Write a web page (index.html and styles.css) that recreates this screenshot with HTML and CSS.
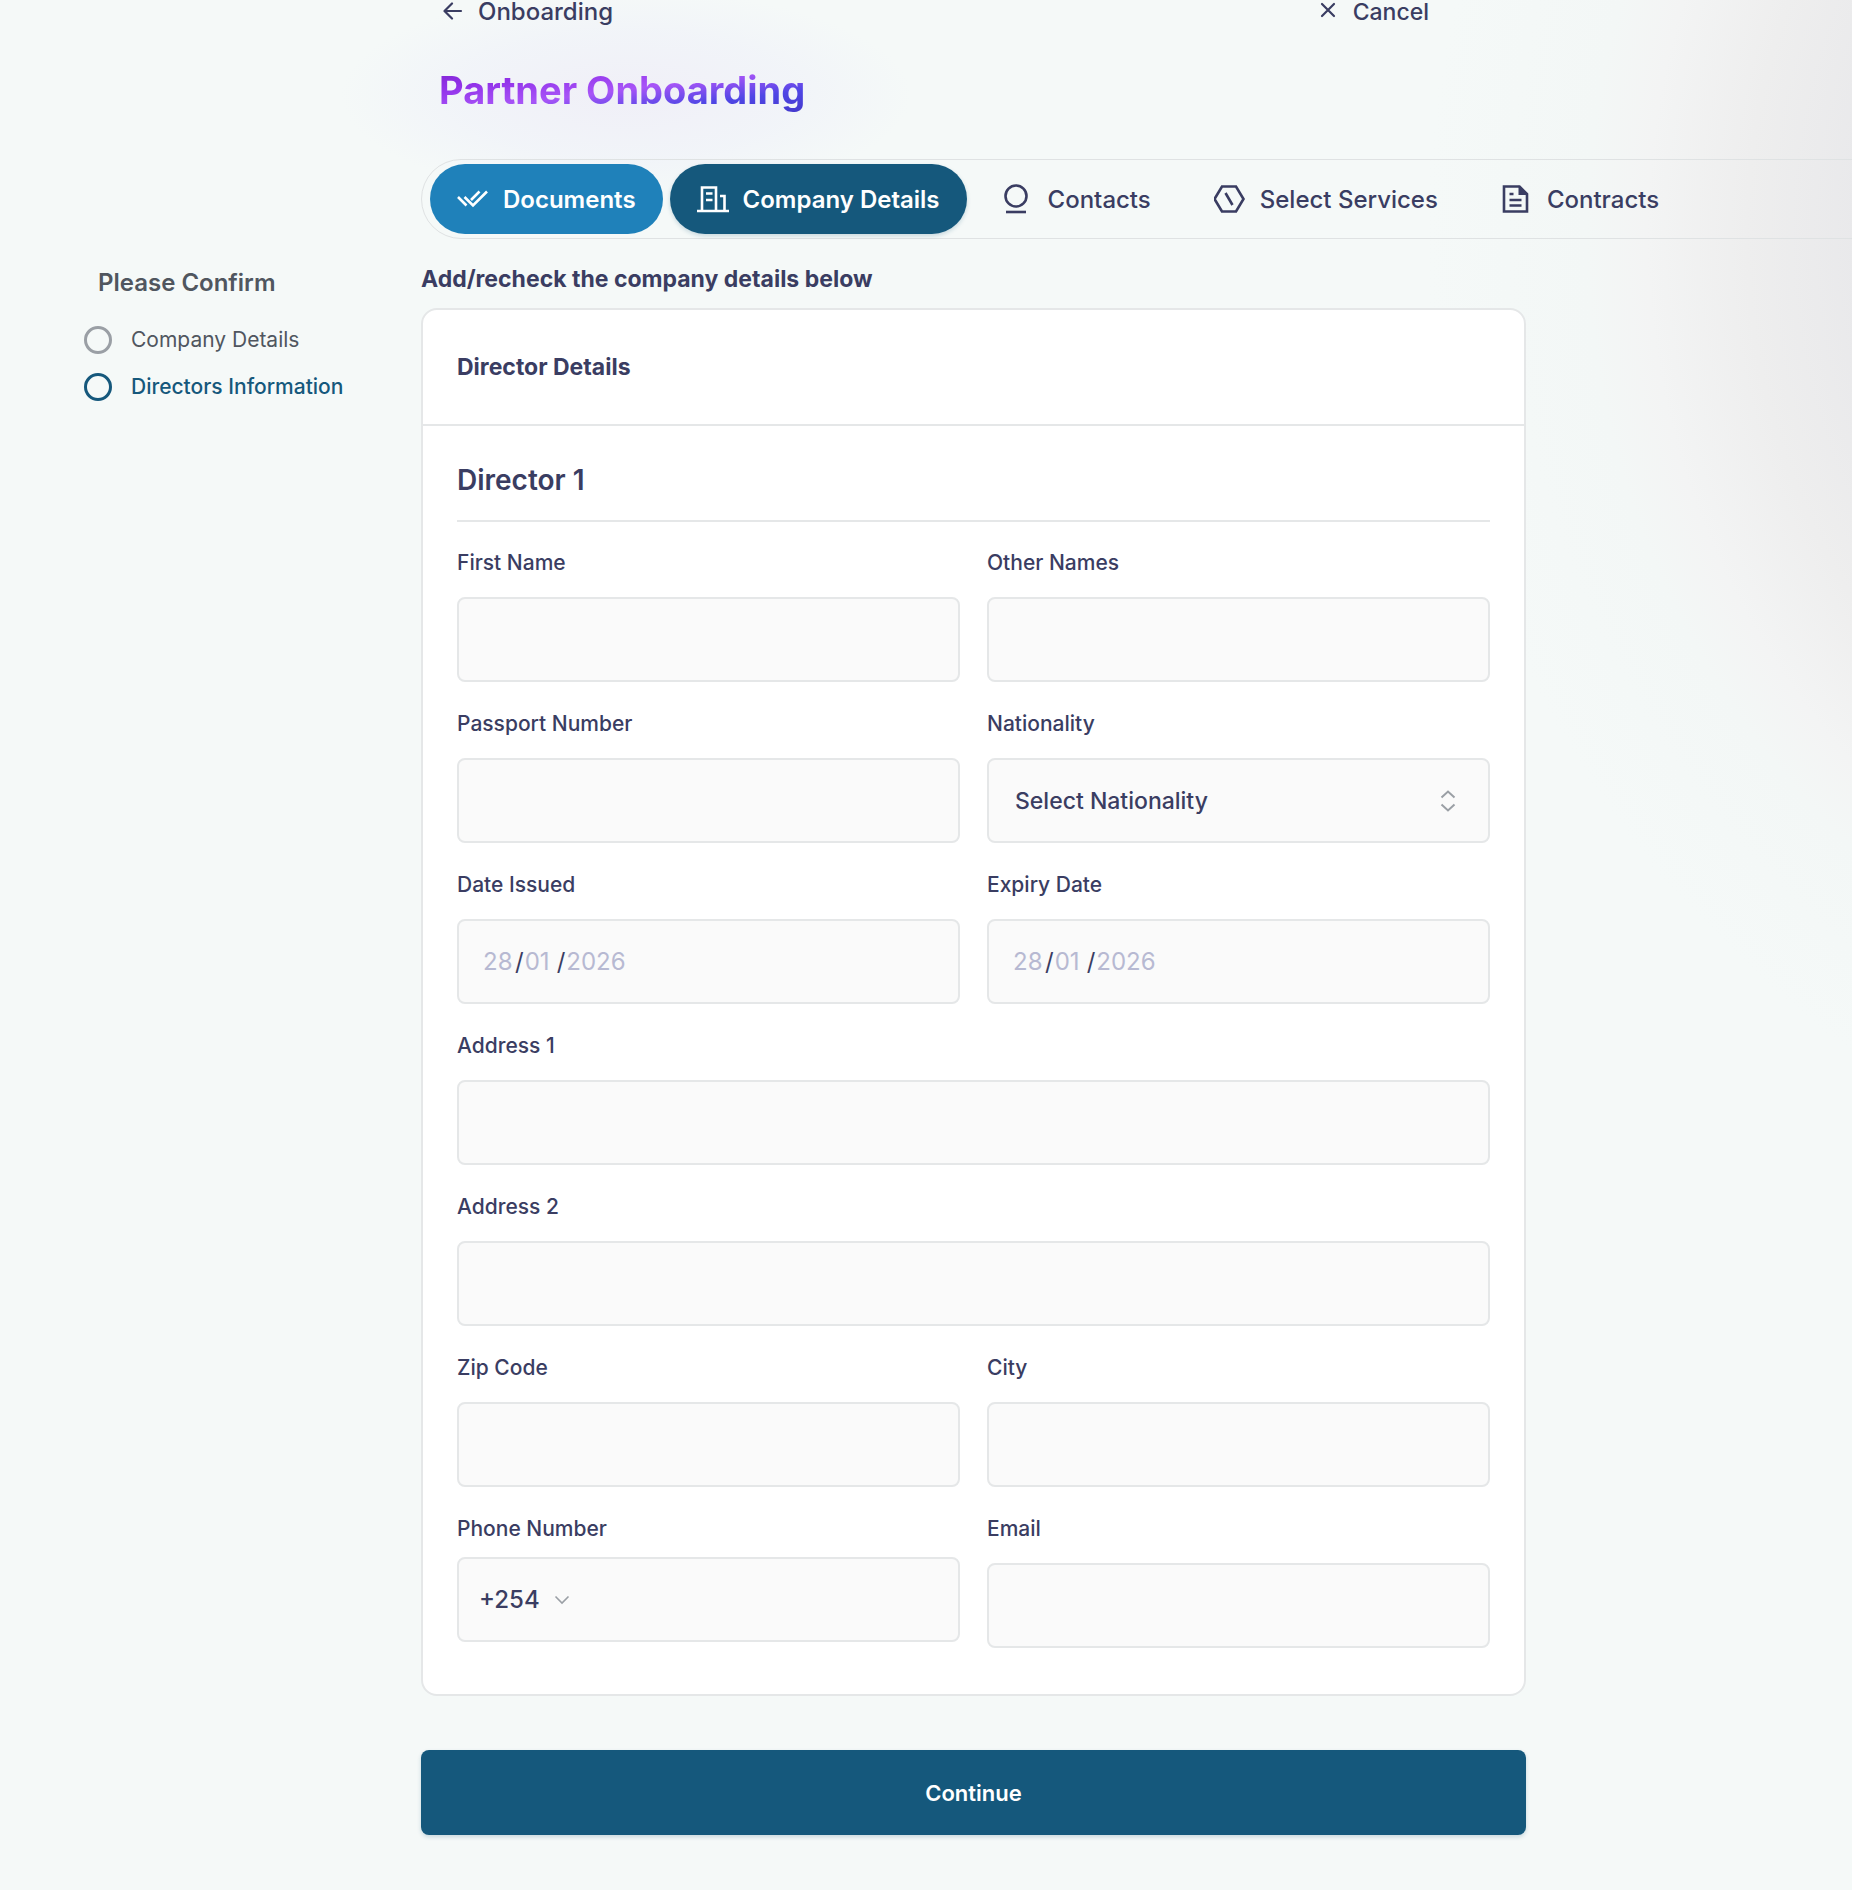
FILE: index.html
```html
<!DOCTYPE html>
<html lang="en">
<head>
    <meta charset="UTF-8">
    <meta name="viewport" content="width=device-width, initial-scale=1.0">
    <title>Partner Onboarding</title>
    <link rel="stylesheet" href="styles.css">
</head>
<body>
    <div class="page">
        <!-- Left steps -->
        <aside class="sidebar">
            <h2>Please Confirm</h2>
            <ul class="steps">
                <li><a href="#company"><span class="dot"></span>Company Details</a></li>
                <li><a href="#directors" class="current"><span class="dot"></span>Directors Information</a></li>
            </ul>
        </aside>

        <main class="content">
            <div class="top-bar">
                <a href="#back" class="top-link">
                    <svg width="20" height="20" viewBox="0 0 20 20" fill="none" stroke="currentColor" stroke-width="2.200" stroke-linecap="round" stroke-linejoin="round"><path d="M18 9H2M9 1.500L1.500 9L9 16.500"/></svg>
                    Onboarding
                </a>
                <a href="#cancel" class="top-link cancel">
                    <svg width="20" height="20" viewBox="0 0 20 20" fill="none" stroke="currentColor" stroke-width="2.200" stroke-linecap="round"><path d="M4 2L16 14M16 2L4 14"/></svg>
                    Cancel
                </a>
            </div>

            <h1><span>Partner Onboarding</span></h1>

            <!-- Tabs -->
            <nav class="tabs">
                <a href="#documents" class="tab done">
                    <svg width="32" height="32" viewBox="0 0 32 32" fill="none" stroke="currentColor" stroke-width="2.600"><path d="M1 14L9.500 22.500M7.500 14L16 22.500L30 8.500M14 17L22.500 8.500"/></svg>
                    Documents
                </a>
                <a href="#company" class="tab active">
                    <svg width="32" height="32" viewBox="0 0 32 32" fill="none" stroke="currentColor" stroke-width="2.600"><path d="M0 28H32M5 28V4.500H19V28M23 13H27.500V28M9 10.500H15.500M9 17H15.500"/></svg>
                    Company Details
                </a>
                <a href="#contacts" class="tab">
                    <svg width="32" height="32" viewBox="0 0 32 32" fill="none" stroke="currentColor" stroke-width="2.600"><circle cx="14" cy="13" r="10.500"/><path d="M4 29H24"/></svg>
                    Contacts
                </a>
                <a href="#services" class="tab">
                    <svg width="32" height="32" viewBox="0 0 32 32" fill="none" stroke="currentColor" stroke-width="2.600"><path d="M8 3.500H22L29.500 16L22 28.500H8L0.500 16ZM11.500 10L18.500 22"/></svg>
                    Select Services
                </a>
                <a href="#contracts" class="tab">
                    <svg width="32" height="32" viewBox="0 0 32 32" fill="none" stroke="currentColor" stroke-width="2.600"><path d="M3 3.500H18.500L26 11V28.500H3ZM8.500 11H12.500M8.500 17H20.500M8.500 22.500H20.500"/><path d="M17.500 2.500L27 12H17.500Z" fill="currentColor" stroke="none"/></svg>
                    Contracts
                </a>
            </nav>

            <form class="form">
                <h3>Add/recheck the company details below</h3>

                <div class="card">
                    <div class="card-header">Director Details</div>

                    <div class="card-body">
                        <h4>Director 1</h4>

                        <div class="fields">
                            <div class="field">
                                <label for="firstName">First Name</label>
                                <input type="text" id="firstName">
                            </div>
                            <div class="field">
                                <label for="otherNames">Other Names</label>
                                <input type="text" id="otherNames">
                            </div>
                            <div class="field">
                                <label for="passport">Passport Number</label>
                                <input type="text" id="passport">
                            </div>
                            <div class="field">
                                <label for="nationality">Nationality</label>
                                <div class="select-box">
                                    <select id="nationality">
                                        <option>Select Nationality</option>
                                    </select>
                                    <svg class="arrows" width="16" height="22" viewBox="0 0 16 22" fill="none" stroke="currentColor" stroke-width="2"><path d="M1.500 7.500L8 1.500L14.500 7.500M1.500 14.500L8 20.500L14.500 14.500"/></svg>
                                </div>
                            </div>
                            <div class="field">
                                <label for="issuedDay">Date Issued</label>
                                <div class="date-box">
                                    <input type="text" id="issuedDay" class="part" placeholder="28"><span>/</span><input type="text" class="part" placeholder="01" aria-label="Month issued"><span>/</span><input type="text" class="part year" placeholder="2026" aria-label="Year issued">
                                </div>
                            </div>
                            <div class="field">
                                <label for="expiryDay">Expiry Date</label>
                                <div class="date-box">
                                    <input type="text" id="expiryDay" class="part" placeholder="28"><span>/</span><input type="text" class="part" placeholder="01" aria-label="Expiry month"><span>/</span><input type="text" class="part year" placeholder="2026" aria-label="Expiry year">
                                </div>
                            </div>
                            <div class="field wide">
                                <label for="address1">Address 1</label>
                                <input type="text" id="address1">
                            </div>
                            <div class="field wide">
                                <label for="address2">Address 2</label>
                                <input type="text" id="address2">
                            </div>
                            <div class="field">
                                <label for="zip">Zip Code</label>
                                <input type="text" id="zip">
                            </div>
                            <div class="field">
                                <label for="city">City</label>
                                <input type="text" id="city">
                            </div>
                            <div class="field phone">
                                <label for="phone">Phone Number</label>
                                <div class="phone-box">
                                    <select aria-label="Country code">
                                        <option>+254</option>
                                    </select>
                                    <svg width="16" height="10" viewBox="0 0 16 10" fill="none" stroke="currentColor" stroke-width="1.600"><path d="M1.500 1.500L8 8L14.500 1.500"/></svg>
                                    <input type="tel" id="phone">
                                </div>
                            </div>
                            <div class="field">
                                <label for="email">Email</label>
                                <input type="email" id="email">
                            </div>
                        </div>
                    </div>
                </div>

                <button type="submit" class="btn">Continue</button>
            </form>
        </main>
    </div>
</body>
</html>
```
FILE: styles.css
```css
* {
    box-sizing: border-box;
}

body {
    margin: 0;
    min-height: 100vh;
    font-family: Inter, "Liberation Sans", sans-serif;
    font-weight: 500;
    color: #3a3d62;
    background-color: #f5f9f8;
    background-image: radial-gradient(circle 1000px at calc(100% + 575px) 235px, #e9e9eb 57%, #eeeeee 68%, #f3f4f4 78%, #f3f7f6 84%, #f5f9f8 100%);
    background-repeat: no-repeat;
    overflow-x: hidden;
}

a {
    color: inherit;
    text-decoration: none;
}

.page {
    display: grid;
    grid-template-columns: 337px minmax(0, 1fr);
    padding-left: 84px;
}

/* Sidebar */
.sidebar {
    padding-top: 267px;
}

.sidebar h2 {
    margin: 0 0 27px;
    padding-left: 14px;
    font-size: 24px;
    line-height: 32px;
    font-weight: 600;
    color: #50565f;
}

.steps {
    list-style: none;
    margin: 0;
    padding: 0;
    display: grid;
    row-gap: 19px;
}

.steps a {
    display: flex;
    align-items: center;
    gap: 19px;
    font-size: 21px;
    line-height: 28px;
    font-weight: 400;
    color: #50565f;
}

.steps .current {
    color: #15587c;
    font-weight: 500;
}

.dot {
    width: 28px;
    height: 28px;
    border: 3px solid #9a9fa5;
    border-radius: 50%;
}

.current .dot {
    border-color: #15587c;
}

/* Top links */
.top-bar {
    position: relative;
    z-index: 1;
    display: flex;
    justify-content: space-between;
    max-width: 1105px;
    height: 40px;
    padding: 0 97px 0 22px;
}

.top-link {
    display: flex;
    align-items: center;
    gap: 15px;
    height: 23px;
    font-size: 24px;
}

.top-link.cancel {
    font-size: 23px;
}

h1 {
    position: relative;
    z-index: 0;
    margin: 0;
    padding: 26px 18px 45px;
    font-size: 38px;
    line-height: 48px;
    font-weight: 700;
}

/* Soft glow behind the title */
h1::before {
    content: "";
    position: absolute;
    z-index: -1;
    top: -50px;
    left: -80px;
    width: 570px;
    height: 210px;
    background: radial-gradient(closest-side, rgba(238, 235, 247, 0.7), rgba(239, 241, 249, 0.6) 60%, rgba(241, 245, 250, 0));
}

h1 span {
    display: inline-block;
    background: linear-gradient(to bottom right, #7e22ce, #9333ea, #a855f7, #4f46e5, #4338ca);
    -webkit-background-clip: text;
    background-clip: text;
    color: transparent;
}

/* Tabs */
.tabs {
    position: relative;
    display: flex;
    gap: 7px;
    margin-right: -40px;
    padding: 4px 8px;
    border: 1px solid #dfe2e3;
    border-radius: 41px;
}

.tab {
    display: flex;
    align-items: center;
    gap: 14px;
    height: 70px;
    padding: 0 28px;
    border-radius: 35px;
    font-size: 24px;
    white-space: nowrap;
}

.tab.done,
.tab.active {
    padding: 0 27px;
    color: #fff;
    font-weight: 600;
}

.tab.done {
    background-color: #1f81ba;
}

.tab.active {
    background-color: #15587c;
    box-shadow: 0 2px 4px rgba(21, 88, 124, 0.2);
}

/* Form */
.form {
    max-width: 1105px;
    padding-bottom: 55px;
}

h3 {
    margin: 0;
    padding: 25px 0 14px;
    font-size: 23px;
    line-height: 30px;
    font-weight: 700;
}

.card {
    background-color: #fff;
    border: 2px solid #e5e7e8;
    border-radius: 16px;
}

.card-header {
    padding: 42px 34px;
    border-bottom: 2px solid #e5e7e8;
    font-size: 23px;
    line-height: 30px;
    font-weight: 700;
}

.card-body {
    padding: 34px 34px 46px;
}

h4 {
    margin: 0 0 27px;
    padding-bottom: 20px;
    border-bottom: 2px solid #e5e7e8;
    font-size: 28px;
    line-height: 40px;
    font-weight: 600;
}

.fields {
    display: grid;
    grid-template-columns: repeat(2, minmax(0, 1fr));
    gap: 28px 27px;
}

.field {
    display: flex;
    flex-direction: column;
    gap: 20px;
}

.field.wide {
    grid-column: span 2;
}

.field.phone {
    gap: 14px;
}

label {
    font-size: 21px;
    line-height: 28px;
}

.field > input,
.select-box select,
.date-box,
.phone-box {
    width: 100%;
    height: 85px;
    border: 2px solid #e5e7e8;
    border-radius: 8px;
    background-color: #fafafa;
    font: inherit;
    font-size: 23px;
    color: inherit;
}

.field > input {
    padding: 0 26px;
}

.select-box {
    position: relative;
}

select {
    appearance: none;
    font: inherit;
    color: inherit;
}

.select-box select {
    padding: 0 26px;
}

.arrows {
    position: absolute;
    top: 32px;
    right: 34px;
    color: #9a9fa5;
}

.date-box {
    display: flex;
    align-items: center;
    padding: 0 24px;
    font-size: 24px;
    font-weight: 400;
}

.date-box span {
    margin: 0 1px 0 2px;
}

.date-box .part {
    width: 30px;
    padding: 0;
    border: 0;
    background: none;
    font: inherit;
}

.date-box .year {
    width: 64px;
}

.part::placeholder {
    color: #b7b9d2;
}

.phone-box {
    display: flex;
    align-items: center;
    gap: 14px;
    padding: 0 20px;
    font-size: 24px;
}

.phone-box select {
    padding: 0;
    border: 0;
    background: none;
}

.phone-box svg {
    color: #9a9fa5;
}

.phone-box input {
    flex: 1;
    min-width: 0;
    border: 0;
    background: none;
    font: inherit;
}

.btn {
    display: block;
    width: 100%;
    height: 85px;
    margin-top: 54px;
    border: 0;
    border-radius: 8px;
    background-color: #15587c;
    color: #fff;
    font: inherit;
    font-size: 22px;
    font-weight: 600;
    box-shadow: 0 2px 4px rgba(21, 88, 124, 0.2);
    cursor: pointer;
}
```
